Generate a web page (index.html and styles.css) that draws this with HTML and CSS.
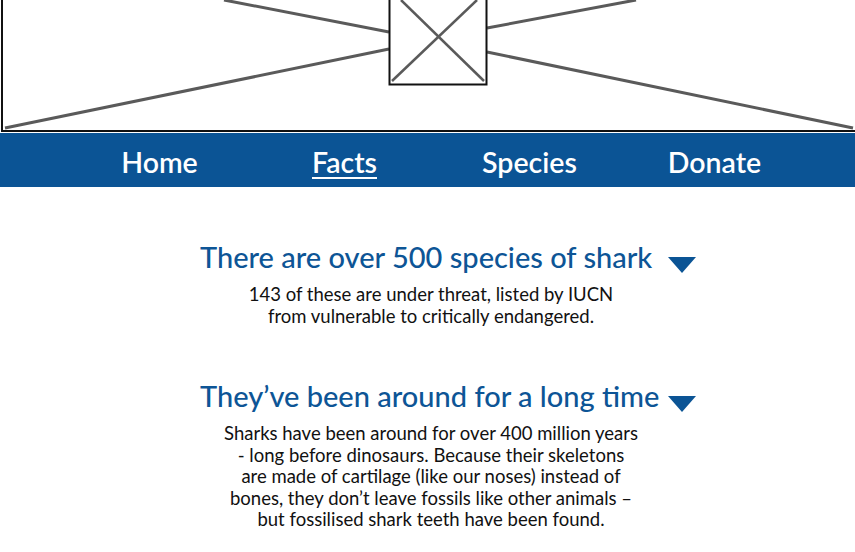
FILE: index.html
```html
<!DOCTYPE html>
<html lang="en">
<head>
<meta charset="utf-8">
<title>Shark Facts</title>
<link rel="stylesheet" href="styles.css">
</head>
<body>
<header class="hero">
  <svg class="hero-art" width="855" height="133" viewBox="0 0 855 133" aria-hidden="true">
    <g stroke="#5a5a5a" stroke-width="3" fill="none">
      <line x1="224" y1="0" x2="389" y2="32"/>
      <line x1="5" y1="128" x2="389" y2="49"/>
      <line x1="636" y1="0" x2="487" y2="28"/>
      <line x1="853" y1="128" x2="487" y2="52"/>
    </g>
    <g stroke="#5a5a5a" stroke-width="2.5">
      <line x1="401" y1="0" x2="484" y2="81"/>
      <line x1="477" y1="0" x2="392" y2="81"/>
    </g>
    <rect x="389.5" y="-5" width="97" height="89.5" fill="none" stroke="#111" stroke-width="2"/>
    <line x1="2" y1="0" x2="2" y2="132" stroke="#111" stroke-width="2"/>
    <line x1="1" y1="131" x2="855" y2="131" stroke="#111" stroke-width="2"/>
  </svg>
</header>
<nav class="nav">
  <a class="nav-link" href="#">Home</a>
  <a class="nav-link active" href="#">Facts</a>
  <a class="nav-link" href="#">Species</a>
  <a class="nav-link" href="#">Donate</a>
</nav>
<main class="facts">
  <section class="fact">
    <div class="fact-head">
      <h2 class="fact-title">There are over 500 species of shark</h2>
      <span class="caret"></span>
    </div>
    <p class="fact-body">143 of these are under threat, listed by IUCN<br>from vulnerable to critically endangered.</p>
  </section>
  <section class="fact">
    <div class="fact-head">
      <h2 class="fact-title">They’ve been around for a long time</h2>
      <span class="caret"></span>
    </div>
    <p class="fact-body">Sharks have been around for over 400 million years<br>- long before dinosaurs. Because their skeletons<br>are made of cartilage (like our noses) instead of<br>bones, they don’t leave fossils like other animals –<br>but fossilised shark teeth have been found.</p>
  </section>
</main>
</body>
</html>
```
FILE: styles.css
```css
html, body {
  margin: 0;
  padding: 0;
  background: #ffffff;
}
body {
  font-family: "Lato", "Open Sans", sans-serif;
  color: #111;
  width: 855px;
  height: 552px;
  overflow: hidden;
}
.hero {
  height: 133px;
  display: block;
}
.hero-art {
  display: block;
}
.nav {
  height: 54px;
  background: #0b5495;
  display: grid;
  grid-template-columns: repeat(4, 185px);
  justify-content: center;
  align-items: center;
  padding-left: 19px;
}
.nav-link {
  color: #ffffff;
  text-decoration: none;
  font-size: 28.5px;
  font-weight: 600;
  text-align: center;
  line-height: 1;
  padding-top: 5px;
}
.nav-link.active {
  text-decoration: underline;
  text-decoration-thickness: 2px;
  text-underline-offset: 4px;
}
.facts {
  padding: 53px 0 0 200px;
}
.fact {
  width: 496px;
  margin-bottom: 52px;
}
.fact-head {
  display: flex;
  align-items: center;
  justify-content: space-between;
  height: 34px;
}
.fact-title {
  margin: 0;
  font-size: 29px;
  font-weight: 500;
  color: #0d5596;
  line-height: 34px;
  white-space: nowrap;
}
.caret {
  width: 0;
  height: 0;
  border-left: 14px solid transparent;
  border-right: 14px solid transparent;
  border-top: 16px solid #0b5495;
  margin-top: 15px;
  flex: none;
}
.fact-body {
  width: 462px;
  margin: 10px 0 0;
  text-align: center;
  font-size: 18.5px;
  line-height: 21.5px;
  color: #111;
}
```
